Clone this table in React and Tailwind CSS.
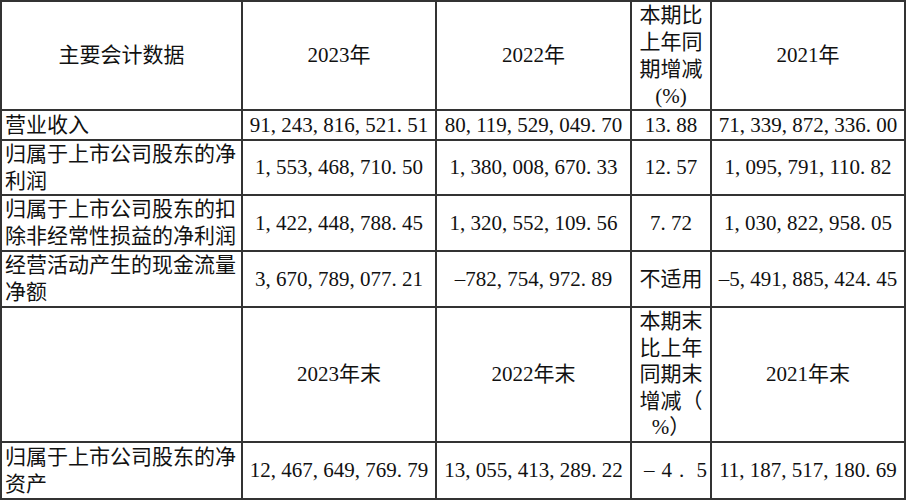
const rows = [
  { label: ['营业收入'], v: ['91,243,816,521.51', '80,119,529,049.70', '13.88', '71,339,872,336.00'] },
  { label: ['归属于上市公司股东的净', '利润'], v: ['1,553,468,710.50', '1,380,008,670.33', '12.57', '1,095,791,110.82'] },
  { label: ['归属于上市公司股东的扣', '除非经常性损益的净利润'], v: ['1,422,448,788.45', '1,320,552,109.56', '7.72', '1,030,822,958.05'] },
  { label: ['经营活动产生的现金流量', '净额'], v: ['3,670,789,077.21', '-782,754,972.89', '不适用', '-5,491,885,424.45'] },
];

// SimSun style: every half-width char takes half an em
function Num({ s }) {
  return (
    <span className="whitespace-nowrap">
      {s.split('').map((c, i) =>
        c === ',' || c === '.' ? (
          <span key={i} className="inline-block w-[0.5em]">{c}</span>
        ) : c === '-' ? (
          <span key={i} className="inline-block w-[0.5em] text-center">–</span>
        ) : (
          c
        )
      )}
    </span>
  );
}

function Cell({ children, className = '' }) {
  return <div className={`bg-white flex items-center justify-center ${className}`}>{children}</div>;
}

function Lines({ lines, className = '' }) {
  return (
    <div className={`flex flex-col ${className}`}>
      {lines.map((l) => (
        <span key={l} className="whitespace-nowrap">{l}</span>
      ))}
    </div>
  );
}

export default function App() {
  return (
    <div className="w-[906px] h-[500px] bg-[#333] p-[2px] grid grid-cols-[239px_192px_193px_78px_192px] grid-rows-[107px_28px_53px_54px_54px_133px_55px] gap-[2px] text-[21px] leading-[27px] text-[#111] font-['Liberation_Serif','Noto_Sans_CJK_SC',serif]">
      {/* header */}
      <Cell>主要会计数据</Cell>
      <Cell>2023年</Cell>
      <Cell>2022年</Cell>
      <Cell>
        <Lines lines={['本期比', '上年同', '期增减', '(%)']} className="items-center" />
      </Cell>
      <Cell>2021年</Cell>

      {rows.map((r) => (
        <div key={r.label[0]} className="contents">
          <Cell className="justify-start pl-[3px]">
            <Lines lines={r.label} />
          </Cell>
          {r.v.map((v, i) => (
            <Cell key={i}>
              <Num s={v} />
            </Cell>
          ))}
        </div>
      ))}

      {/* balance header */}
      <Cell />
      <Cell>2023年末</Cell>
      <Cell>2022年末</Cell>
      <Cell>
        <Lines lines={['本期末', '比上年', '同期末', '增减（', '%）']} className="items-center leading-[26.5px]" />
      </Cell>
      <Cell>2021年末</Cell>

      <Cell className="justify-start pl-[3px]">
        <Lines lines={['归属于上市公司股东的净', '资产']} />
      </Cell>
      <Cell>
        <Num s="12,467,649,769.79" />
      </Cell>
      <Cell>
        <Num s="13,055,413,289.22" />
      </Cell>
      <Cell className="justify-end pr-[3px]">
        <div className="flex gap-[7px]">
          <span className="w-[0.5em] text-center">–</span>
          <span className="w-[0.5em]">4</span>
          <span className="w-[0.5em]">.</span>
          <span className="w-[0.5em]">5</span>
        </div>
      </Cell>
      <Cell>
        <Num s="11,187,517,180.69" />
      </Cell>
    </div>
  );
}
